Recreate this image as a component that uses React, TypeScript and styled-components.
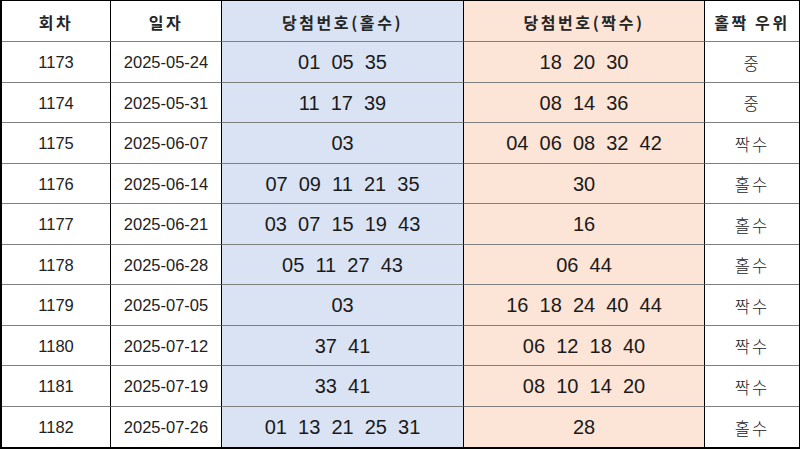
import React from "react";
import styled, { createGlobalStyle } from "styled-components";

const Global = createGlobalStyle`
  html, body { margin: 0; padding: 0; background: #ffffff; }
  body { width: 800px; height: 450px; overflow: hidden; }
`;

const Table = styled.div`
  box-sizing: border-box;
  width: 800px;
  height: 449px;
  display: grid;
  grid-template-columns: 109px 111px 242px 241px 1fr;
  grid-template-rows: 41px repeat(10, 1fr);
  border-left: 2px solid #000;
  border-top: 1px solid #000;
  border-right: 1px solid #000;
  border-bottom: 2px solid #000;
  color: #1a1a1a;
`;

type Tone = "plain" | "odd" | "even";

const toneBg: Record<Tone, string> = {
  plain: "#ffffff",
  odd: "#dae3f3",
  even: "#fce4d6",
};

const Cell = styled.div<{ $tone: Tone; $last?: boolean; $bottom?: boolean }>`
  box-sizing: border-box;
  display: flex;
  align-items: center;
  justify-content: center;
  padding-top: 2px;
  background: ${(p) => toneBg[p.$tone]};
  border-right: ${(p) => (p.$last ? "none" : "1px solid #000")};
  border-bottom: ${(p) => (p.$bottom ? "none" : "1px solid #808080")};
  white-space: pre;
  overflow: hidden;
`;

const HeadText = styled.span`
  font-family: "Noto Sans CJK KR", "Noto Sans", sans-serif;
  font-weight: 700;
  font-size: 16px;
  letter-spacing: 2.6px;
  color: #262626;
`;

const Plain = styled.span`
  font-family: "Liberation Sans", Arial, sans-serif;
  font-size: 16.5px;
  color: #222;
`;

const Numbers = styled.span`
  font-family: "Liberation Sans", Arial, sans-serif;
  font-size: 20px;
  color: #1a1a1a;
`;

const Verdict = styled.span`
  font-family: "Noto Sans CJK KR", sans-serif;
  font-weight: 300;
  font-size: 16.5px;
  letter-spacing: 2px;
  color: #222;
`;

type Row = {
  round: string;
  date: string;
  odd: string[];
  even: string[];
  verdict: string;
};

const rows: Row[] = [
  { round: "1173", date: "2025-05-24", odd: ["01", "05", "35"], even: ["18", "20", "30"], verdict: "중" },
  { round: "1174", date: "2025-05-31", odd: ["11", "17", "39"], even: ["08", "14", "36"], verdict: "중" },
  { round: "1175", date: "2025-06-07", odd: ["03"], even: ["04", "06", "08", "32", "42"], verdict: "짝수" },
  { round: "1176", date: "2025-06-14", odd: ["07", "09", "11", "21", "35"], even: ["30"], verdict: "홀수" },
  { round: "1177", date: "2025-06-21", odd: ["03", "07", "15", "19", "43"], even: ["16"], verdict: "홀수" },
  { round: "1178", date: "2025-06-28", odd: ["05", "11", "27", "43"], even: ["06", "44"], verdict: "홀수" },
  { round: "1179", date: "2025-07-05", odd: ["03"], even: ["16", "18", "24", "40", "44"], verdict: "짝수" },
  { round: "1180", date: "2025-07-12", odd: ["37", "41"], even: ["06", "12", "18", "40"], verdict: "짝수" },
  { round: "1181", date: "2025-07-19", odd: ["33", "41"], even: ["08", "10", "14", "20"], verdict: "짝수" },
  { round: "1182", date: "2025-07-26", odd: ["01", "13", "21", "25", "31"], even: ["28"], verdict: "홀수" },
];

const headers: { label: string; tone: Tone }[] = [
  { label: "회차", tone: "plain" },
  { label: "일자", tone: "plain" },
  { label: "당첨번호(홀수)", tone: "odd" },
  { label: "당첨번호(짝수)", tone: "even" },
  { label: "홀짝 우위", tone: "plain" },
];

export default function App() {
  return (
    <>
      <Global />
      <Table>
        {headers.map((h, i) => (
          <Cell key={h.label} $tone={h.tone} $last={i === 4}>
            <HeadText>{h.label}</HeadText>
          </Cell>
        ))}
        {rows.map((r, idx) => {
          const bottom = idx === rows.length - 1;
          return (
            <React.Fragment key={r.round}>
              <Cell $tone="plain" $bottom={bottom}>
                <Plain>{r.round}</Plain>
              </Cell>
              <Cell $tone="plain" $bottom={bottom}>
                <Plain>{r.date}</Plain>
              </Cell>
              <Cell $tone="odd" $bottom={bottom}>
                <Numbers>{r.odd.join("  ")}</Numbers>
              </Cell>
              <Cell $tone="even" $bottom={bottom}>
                <Numbers>{r.even.join("  ")}</Numbers>
              </Cell>
              <Cell $tone="plain" $last $bottom={bottom}>
                <Verdict>{r.verdict}</Verdict>
              </Cell>
            </React.Fragment>
          );
        })}
      </Table>
    </>
  );
}
